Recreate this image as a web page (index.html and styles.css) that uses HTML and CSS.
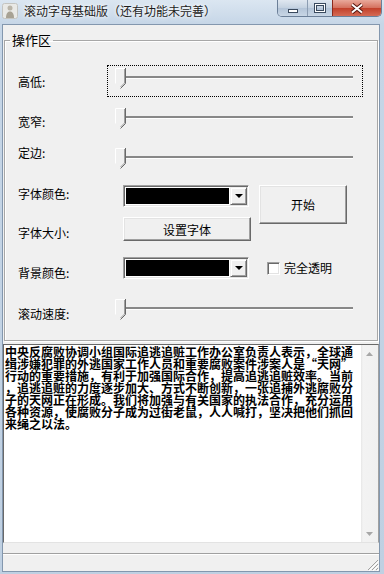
FILE: index.html
```html
<!DOCTYPE html>
<html lang="zh-CN">
<head>
    <meta charset="UTF-8">
    <title>滚动字母基础版</title>
    <link rel="stylesheet" href="styles.css">
</head>
<body>

<div class="window">
    <div class="titlebar">
        <div class="app-icon">
            <svg width="16" height="16" viewBox="0 0 16 16">
                <rect x="0.5" y="0.5" width="15" height="15" rx="2" fill="#e9e9e6" stroke="#c4c4c0"/>
                <circle cx="8" cy="5" r="2.5" fill="#b9b4a8"/>
                <path d="M4 15 C4 10 6 8.5 8 8.5 C10 8.5 12 10 12 15 Z" fill="#a8a294"/>
            </svg>
        </div>
        <div class="caption">滚动字母基础版（还有功能未完善）</div>
        <div class="caption-buttons">
            <div class="cbtn cbtn-min">
                <svg width="12" height="6" viewBox="0 0 12 6"><rect x="1.5" y="1.5" width="9" height="3" fill="#fff" stroke="#3a4a5e"/></svg>
            </div>
            <div class="cbtn cbtn-max">
                <svg width="12" height="10" viewBox="0 0 12 10"><rect x="1.5" y="1.5" width="9" height="7" fill="none" stroke="#3a4a5e" stroke-width="3"/><rect x="1.5" y="1.5" width="9" height="7" fill="none" stroke="#fff"/></svg>
            </div>
            <div class="cbtn cbtn-close">
                <svg width="14" height="11" viewBox="0 0 14 11"><path d="M2 1.5 L12 9.5 M12 1.5 L2 9.5" stroke="#5a1a12" stroke-width="4"/><path d="M2 1.5 L12 9.5 M12 1.5 L2 9.5" stroke="#fff" stroke-width="2"/></svg>
            </div>
        </div>
    </div>

    <div class="client">
        <fieldset class="group">
            <legend>操作区</legend>

            <div class="slider-row row-height">
                <span class="label">高低:</span>
                <div class="trackbar focused">
                    <div class="track"></div>
                    <svg class="thumb" width="11" height="21" viewBox="0 0 11 21">
                        <path d="M0.5 0.5 H10.5 V15.5 L5.5 20.5 L0.5 15.5 Z" fill="#f0f0f0"/>
                        <path d="M0.5 15.5 V0.5 H10" fill="none" stroke="#fff"/>
                        <path d="M10.5 0 V15.5 L5.5 20.5" fill="none" stroke="#696969"/>
                        <path d="M9.5 1 V15 L5.5 19" fill="none" stroke="#a0a0a0"/>
                    </svg>
                </div>
            </div>

            <div class="slider-row row-width">
                <span class="label">宽窄:</span>
                <div class="trackbar">
                    <div class="track"></div>
                    <svg class="thumb" width="11" height="21" viewBox="0 0 11 21">
                        <path d="M0.5 0.5 H10.5 V15.5 L5.5 20.5 L0.5 15.5 Z" fill="#f0f0f0"/>
                        <path d="M0.5 15.5 V0.5 H10" fill="none" stroke="#fff"/>
                        <path d="M10.5 0 V15.5 L5.5 20.5" fill="none" stroke="#696969"/>
                        <path d="M9.5 1 V15 L5.5 19" fill="none" stroke="#a0a0a0"/>
                    </svg>
                </div>
            </div>

            <div class="slider-row row-edge">
                <span class="label">定边:</span>
                <div class="trackbar">
                    <div class="track"></div>
                    <svg class="thumb" width="11" height="21" viewBox="0 0 11 21">
                        <path d="M0.5 0.5 H10.5 V15.5 L5.5 20.5 L0.5 15.5 Z" fill="#f0f0f0"/>
                        <path d="M0.5 15.5 V0.5 H10" fill="none" stroke="#fff"/>
                        <path d="M10.5 0 V15.5 L5.5 20.5" fill="none" stroke="#696969"/>
                        <path d="M9.5 1 V15 L5.5 19" fill="none" stroke="#a0a0a0"/>
                    </svg>
                </div>
            </div>

            <div class="color-grid">
                <span class="label label-fg">字体颜色:</span>
                <div class="combo">
                    <div class="swatch"></div>
                    <div class="drop"><span class="arrow"></span></div>
                </div>
                <button class="btn btn-start">开始</button>

                <span class="label label-size">字体大小:</span>
                <button class="btn btn-font">设置字体</button>

                <span class="label label-bg">背景颜色:</span>
                <div class="combo">
                    <div class="swatch"></div>
                    <div class="drop"><span class="arrow"></span></div>
                </div>
                <label class="check">
                    <span class="checkbox"></span>
                    <span>完全透明</span>
                </label>
            </div>

            <div class="slider-row row-speed">
                <span class="label">滚动速度:</span>
                <div class="trackbar">
                    <div class="track"></div>
                    <svg class="thumb" width="11" height="21" viewBox="0 0 11 21">
                        <path d="M0.5 0.5 H10.5 V15.5 L5.5 20.5 L0.5 15.5 Z" fill="#f0f0f0"/>
                        <path d="M0.5 15.5 V0.5 H10" fill="none" stroke="#fff"/>
                        <path d="M10.5 0 V15.5 L5.5 20.5" fill="none" stroke="#696969"/>
                        <path d="M9.5 1 V15 L5.5 19" fill="none" stroke="#a0a0a0"/>
                    </svg>
                </div>
            </div>
        </fieldset>

        <div class="memo">
            <div class="memo-text">
                <div>中央反腐败协调小组国际追逃追赃工作办公室负责人表示，全球通</div>
                <div>缉涉嫌犯罪的外逃国家工作人员和重要腐败案件涉案人是“天网”</div>
                <div>行动的重要措施，有利于加强国际合作，提高追逃追赃效率。当前</div>
                <div>，追逃追赃的力度逐步加大、方式不断创新，一张追捕外逃腐败分</div>
                <div>子的天网正在形成。我们将加强与有关国家的执法合作，充分运用</div>
                <div>各种资源，使腐败分子成为过街老鼠，人人喊打，坚决把他们抓回</div>
                <div>来绳之以法。</div>
            </div>
            <div class="vscroll">
                <div class="sbtn"><svg width="7" height="4" viewBox="0 0 7 4"><path d="M0 4 L3.5 0 L7 4 Z" fill="#a7a7a7"/></svg></div>
                <div class="strack"></div>
                <div class="sbtn"><svg width="7" height="4" viewBox="0 0 7 4"><path d="M0 0 L3.5 4 L7 0 Z" fill="#a7a7a7"/></svg></div>
            </div>
        </div>

        <div class="strip"></div>

        <div class="statusbar">
            <svg class="grip" width="12" height="12" viewBox="0 0 12 12">
                <path d="M11 1 L1 11 M11 5 L5 11 M11 9 L9 11" stroke="#a0a0a0" stroke-width="1"/>
                <path d="M12 2 L2 12 M12 6 L6 12 M12 10 L10 12" stroke="#fff" stroke-width="1"/>
            </svg>
        </div>
    </div>
</div>

</body>
</html>
```

FILE: styles.css
```css
body {
    margin: 0;
    font-family: "Noto Sans CJK SC", "Noto Sans", sans-serif;
    font-size: 12px;
    color: #000;
}

.window {
    width: 384px;
    height: 574px;
    box-sizing: border-box;
    padding: 0 4px 2px 2px;
    background: linear-gradient(#dbe6f1, #c6d6e7 24px, #bfd0e2);
    display: flex;
    flex-direction: column;
}

/* title bar */
.titlebar {
    height: 24px;
    display: flex;
    align-items: flex-start;
}

.app-icon {
    width: 16px;
    height: 16px;
    margin-top: 3px;
}

.caption {
    margin-left: 6px;
    margin-top: 4px;
    line-height: 14px;
    color: #1c1c1c;
    text-shadow: 0 0 6px #fff, 0 0 3px #fff;
    white-space: nowrap;
}

.caption-buttons {
    margin-left: auto;
    margin-right: -2px;
    display: flex;
    height: 16px;
    border: 1px solid #6b7f98;
    border-top: none;
    border-radius: 0 0 5px 5px;
    overflow: hidden;
}

.cbtn {
    height: 16px;
    display: flex;
    justify-content: center;
    align-items: center;
}

.cbtn-min {
    width: 29px;
    background: linear-gradient(#dfe7f0, #c3d1e0 50%, #b3c4d8 51%, #c8d6e5);
    border-right: 1px solid #8c9db2;
}

.cbtn-min svg {
    margin-top: 5px;
}

.cbtn-max {
    width: 24px;
    background: linear-gradient(#dfe7f0, #c3d1e0 50%, #b3c4d8 51%, #c8d6e5);
    border-right: 1px solid #8c2a1c;
}

.cbtn-close {
    width: 48px;
    background: linear-gradient(#e9a99b, #d4705d 50%, #c2402a 51%, #d56b55);
}

/* client area */
.client {
    flex: 1;
    background: #f0f0f0;
    border: 1px solid #8397ae;
    display: flex;
    flex-direction: column;
}

.group {
    margin: 8px 1px 0 1px;
    padding: 0;
    height: 308px;
    box-sizing: border-box;
    border: 1px solid #a7a7a7;
    box-shadow: inset 1px 1px 0 #fff, 1px 1px 0 #fff;
    min-width: 0;
}

.group legend {
    margin-left: 5px;
    padding: 0 2px;
    line-height: 14px;
    font-size: 13px;
}

.label {
    padding-left: 13px;
    line-height: 14px;
    white-space: nowrap;
}

/* trackbars */
.slider-row {
    display: flex;
    height: 32px;
}

.slider-row .label {
    width: 89px;
}

.row-height { margin-top: 18px; }
.row-height .label { padding-top: 10px; }
.row-width { margin-top: 8px; }
.row-width .label { padding-top: 10px; }
.row-edge { margin-top: 8px; }
.row-edge .label { padding-top: 1px; }
.row-speed { margin-top: 17px; }
.row-speed .label { padding-top: 11px; }

.trackbar {
    position: relative;
    width: 256px;
    height: 32px;
    box-sizing: border-box;
    border: 1px solid transparent;
}

.trackbar.focused {
    border: 1px dotted #000;
}

.track {
    margin: 10px 9px 0 12px;
    border-top: 2px solid #888;
    border-bottom: 1px solid #fff;
}

.thumb {
    position: absolute;
    left: 7px;
    top: 2px;
}

/* colour / font rows */
.color-grid {
    margin-top: 8px;
    display: grid;
    grid-template-columns: 110px 128px 88px;
    grid-template-rows: 32px 40px 22px;
    column-gap: 8px;
    align-items: start;
}

.label-fg { padding-top: 2px; }
.label-size { padding-top: 9px; }
.label-bg { padding-top: 9px; }

.combo {
    width: 126px;
    height: 22px;
    box-sizing: border-box;
    border: 1px solid;
    border-color: #a0a0a0 #fff #fff #a0a0a0;
    box-shadow: inset 1px 1px 0 #696969, inset -1px -1px 0 #e3e3e3;
    padding: 1px;
    display: flex;
    background: #fff;
}

.swatch {
    flex: 1;
    background: #000;
    margin: 1px;
}

.drop {
    width: 17px;
    box-sizing: border-box;
    background: #f0f0f0;
    border: 1px solid;
    border-color: #f0f0f0 #696969 #696969 #f0f0f0;
    box-shadow: inset 1px 1px 0 #fff, inset -1px -1px 0 #a0a0a0;
    display: flex;
    justify-content: center;
    align-items: center;
}

.arrow {
    width: 0;
    height: 0;
    border-left: 4px solid transparent;
    border-right: 4px solid transparent;
    border-top: 4px solid #000;
}

.btn {
    font-family: inherit;
    font-size: 12px;
    color: #000;
    background: #f0f0f0;
    box-sizing: border-box;
    border: 1px solid;
    border-color: #fff #696969 #696969 #fff;
    box-shadow: inset -1px -1px 0 #a0a0a0, inset 1px 1px 0 #e3e3e3;
    padding: 0;
}

.btn-start {
    grid-row: 1 / span 2;
    grid-column: 3;
    height: 39px;
    width: 88px;
}

.btn-font {
    width: 128px;
    height: 24px;
}

.check {
    display: flex;
    align-items: center;
    padding-left: 8px;
    margin-top: 4px;
    gap: 4px;
    line-height: 14px;
}

.checkbox {
    width: 13px;
    height: 13px;
    box-sizing: border-box;
    background: #fff;
    border: 1px solid;
    border-color: #a0a0a0 #fff #fff #a0a0a0;
    box-shadow: inset 1px 1px 0 #696969, inset -1px -1px 0 #e3e3e3;
}

/* memo */
.memo {
    margin-top: 3px;
    height: 199px;
    box-sizing: border-box;
    border: 1px solid;
    border-color: #696969 #a0a0a0 #e3e3e3 #696969;
    background: #fff;
    display: flex;
}

.memo-text {
    flex: 1;
    padding: 1px 0 0 1px;
    font-size: 12px;
    font-weight: bold;
    line-height: 12px;
    white-space: nowrap;
}

.vscroll {
    width: 17px;
    display: flex;
    flex-direction: column;
    background: linear-gradient(to right, #e6e6e6, #f3f3f3 2px, #f0f0f0);
}

.sbtn {
    height: 17px;
    display: flex;
    justify-content: center;
    align-items: center;
}

.strack {
    flex: 1;
}

.strip {
    height: 10px;
}

.statusbar {
    flex: 1;
    border-top: 1px solid #a0a0a0;
    box-shadow: inset 0 1px 0 #fff;
    display: flex;
    justify-content: flex-end;
    align-items: flex-end;
}

.grip {
    display: block;
}
```
